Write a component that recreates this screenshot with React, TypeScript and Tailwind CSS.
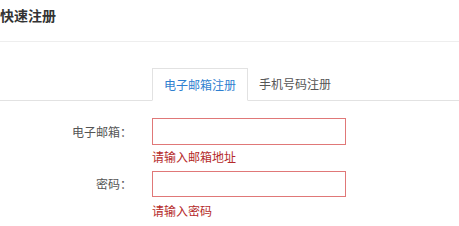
import React from "react";

export default function App() {
  const font = { fontFamily: '"Noto Sans CJK SC", "Noto Sans", sans-serif' };
  return (
    <div className="w-[459px] h-[226px] bg-white overflow-hidden text-[#555]" style={font}>
      <div className="h-[42px] border-b border-[#eeeeee] flex items-start pt-[5px]">
        <h1 className="text-[14px] leading-[20px] font-bold text-[#333] tracking-[0px]">快速注册</h1>
      </div>
      <div className="mt-[26px] pl-[152px] flex border-b border-[#e2e2e2] h-[33px]">
        <div className="px-[11px] h-[33px] -mb-px border border-[#e2e2e2] border-b-white bg-white flex items-center text-[12px] text-[#2f7fd0]">
          电子邮箱注册
        </div>
        <div className="px-[11px] h-[32px] flex items-center text-[12px] text-[#555]">
          手机号码注册
        </div>
      </div>
      <div className="mt-[17px] flex flex-col">
        <div className="flex">
          <label className="w-[132px] text-right text-[12px] h-[27px] leading-[27px] text-[#555]">电子邮箱：</label>
          <div className="ml-[20px] flex flex-col">
            <div className="w-[194px] h-[27px] border border-[#e07878] bg-white" />
            <div className="text-[12px] leading-[16px] mt-[4px] text-[#b52a2a]">请输入邮箱地址</div>
          </div>
        </div>
        <div className="flex mt-[6px]">
          <label className="w-[132px] text-right text-[12px] h-[26px] leading-[26px] text-[#555]">密码：</label>
          <div className="ml-[20px] flex flex-col">
            <div className="w-[194px] h-[26px] border border-[#e07878] bg-white" />
            <div className="text-[12px] leading-[16px] mt-[6px] text-[#b52a2a]">请输入密码</div>
          </div>
        </div>
      </div>
    </div>
  );
}
